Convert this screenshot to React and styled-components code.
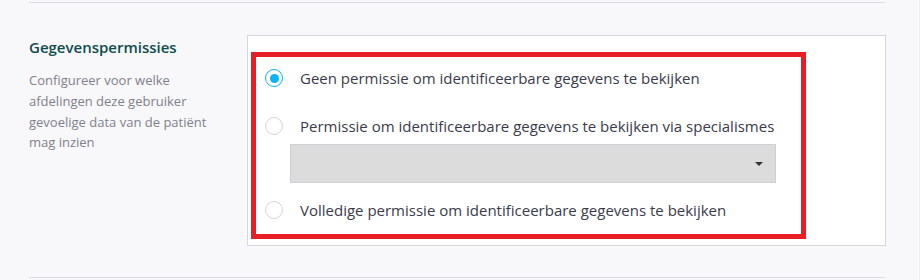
import React from "react";
import styled, { createGlobalStyle } from "styled-components";

const Global = createGlobalStyle`
  html, body { margin: 0; padding: 0; background: #f8f8fa; }
  body { font-family: "Open Sans", "Noto Sans", sans-serif; }
  #root { width: 920px; height: 280px; overflow: hidden; }
`;

const Page = styled.div`
  width: 920px;
  height: 280px;
  box-sizing: border-box;
  padding: 2px 34px 0 29px;
  border-right: 1px solid #efeff2;
`;

const Rule = styled.div`
  height: 1px;
  background: #d9d9e2;
`;

const Section = styled.section`
  display: grid;
  grid-template-columns: 218px 639px;
  padding: 32px 0 31px;
`;

const Intro = styled.div`
  padding-top: 2px;
`;

const Title = styled.h3`
  margin: 0 0 13px;
  font-size: 15px;
  font-weight: 600;
  color: #0e4b4d;
  line-height: 20px;
`;

const Description = styled.p`
  margin: 0;
  font-size: 13px;
  line-height: 20.8px;
  color: #80808c;
  width: 180px;
`;

const Panel = styled.div`
  height: 211px;
  box-sizing: border-box;
  background: #ffffff;
  border: 1px solid #d6d6dd;
  padding: 16px 0 0 3px;
`;

const Highlight = styled.div`
  width: 555px;
  height: 187px;
  box-sizing: border-box;
  border: 5px solid #e81e27;
  padding: 5px 0 0 9px;
  display: flex;
  flex-direction: column;
`;

const Option = styled.label`
  display: flex;
  align-items: center;
  gap: 17px;
  height: 32px;
  margin-bottom: ${(p) => p.$mb || 0}px;
  font-size: 15px;
  color: #3b3b4b;
  cursor: pointer;
`;

const Radio = styled.span`
  width: 18px;
  height: 18px;
  box-sizing: border-box;
  border-radius: 50%;
  border: 1.5px solid ${(p) => (p.$checked ? "#0db2f7" : "#d4d4da")};
  background: #fff;
  display: flex;
  align-items: center;
  justify-content: center;
  flex: none;
  &::after {
    content: "";
    width: 9px;
    height: 9px;
    border-radius: 50%;
    background: ${(p) => (p.$checked ? "#0db2f7" : "transparent")};
  }
`;

const Select = styled.div`
  margin: 2px 0 11px 25px;
  width: 486px;
  height: 39px;
  box-sizing: border-box;
  background: #dcdcdc;
  border: 1px solid #cfcfd3;
  display: flex;
  align-items: center;
  justify-content: flex-end;
  padding-right: 12px;
`;

const Caret = styled.span`
  width: 0;
  height: 0;
  border-left: 4px solid transparent;
  border-right: 4px solid transparent;
  border-top: 4px solid #333;
`;

export default function App() {
  return (
    <>
      <Global />
      <Page>
        <Rule />
        <Section>
          <Intro>
            <Title>Gegevenspermissies</Title>
            <Description>
              Configureer voor welke afdelingen deze gebruiker gevoelige data van de patiënt mag inzien
            </Description>
          </Intro>
          <Panel>
            <Highlight>
              <Option $mb={16}>
                <Radio $checked />
                Geen permissie om identificeerbare gegevens te bekijken
              </Option>
              <Option>
                <Radio />
                Permissie om identificeerbare gegevens te bekijken via specialismes
              </Option>
              <Select>
                <Caret />
              </Select>
              <Option>
                <Radio />
                Volledige permissie om identificeerbare gegevens te bekijken
              </Option>
            </Highlight>
          </Panel>
        </Section>
        <Rule />
      </Page>
    </>
  );
}
